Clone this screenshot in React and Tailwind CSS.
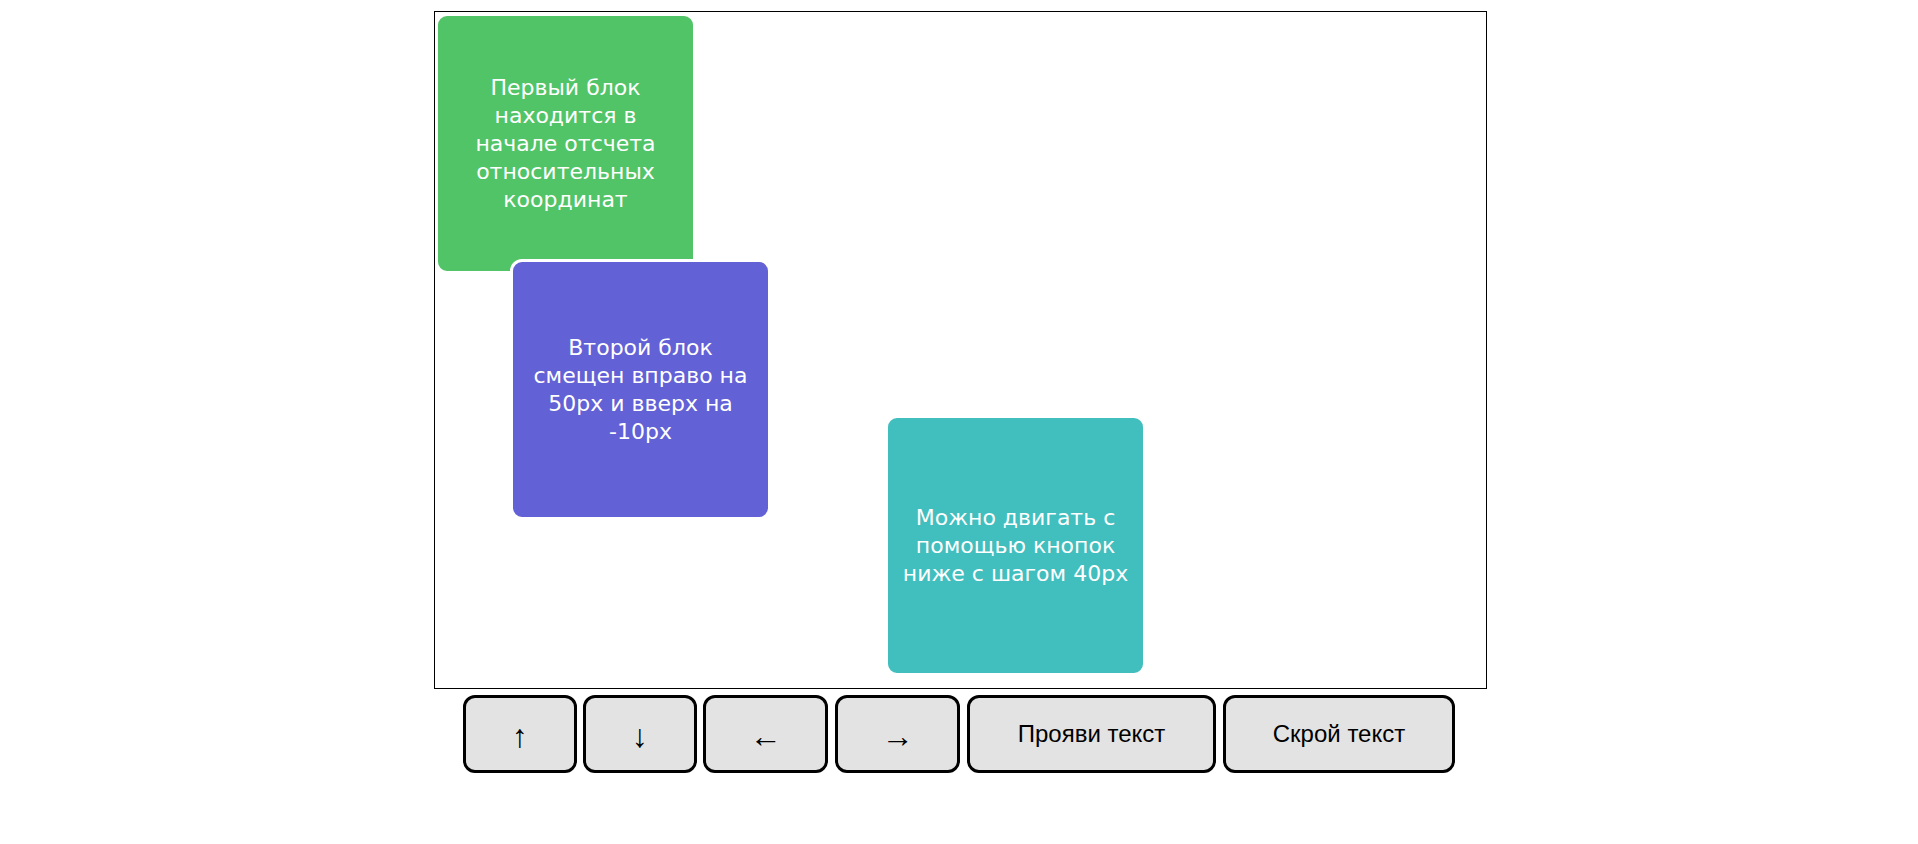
import React from "react";

const blockText = "text-white text-[22px] leading-[28px] text-center";

function Block({ className, lines }) {
  return (
    <div
      className={`absolute w-[261px] h-[261px] border-[3px] border-white rounded-[12px] flex flex-col items-center justify-center ${className}`}
      style={{ fontFamily: '"DejaVu Sans", Verdana, sans-serif' }}
    >
      {lines.map((l, i) => (
        <span key={i} className={`${blockText} whitespace-nowrap`}>
          {l}
        </span>
      ))}
    </div>
  );
}

function Btn({ w, children, arrow }) {
  return (
    <button
      className={`${w} h-[78px] shrink-0 border-[3px] border-black rounded-[12px] bg-[#e3e3e3] text-black flex items-center justify-center ${
        arrow ? "text-[32px] pt-[4px]" : "text-[24px]"
      }`}
      style={{ fontFamily: '"Liberation Sans", Arial, sans-serif' }}
    >
      {children}
    </button>
  );
}

export default function App() {
  return (
    <div className="w-full min-h-[844px] bg-white">
      <div className="ml-[434px] w-[1053px] pt-[11px]">
        <div className="relative w-[1053px] h-[678px] border border-black bg-white">
          <Block
            className="left-0 top-[1px] bg-[#52c468]"
            lines={["Первый блок", "находится в", "начале отсчета", "относительных", "координат"]}
          />
          <Block
            className="left-[75px] top-[247px] bg-[#6261d6]"
            lines={["Второй блок", "смещен вправо на", "50px и вверх на", "-10px"]}
          />
          <Block
            className="left-[450px] top-[403px] bg-[#41bebe]"
            lines={["Можно двигать с", "помощью кнопок", "ниже с шагом 40px"]}
          />
        </div>
        <div className="flex gap-[6px] pl-[29px] mt-[6px]">
          <Btn w="w-[114px]" arrow>↑</Btn>
          <Btn w="w-[114px]" arrow>↓</Btn>
          <Btn w="w-[125px]" arrow>←</Btn>
          <Btn w="w-[125px] ml-[1px]" arrow>→</Btn>
          <Btn w="w-[249px] ml-[1px]">Прояви текст</Btn>
          <Btn w="w-[232px] ml-[1px]">Скрой текст</Btn>
        </div>
      </div>
    </div>
  );
}
